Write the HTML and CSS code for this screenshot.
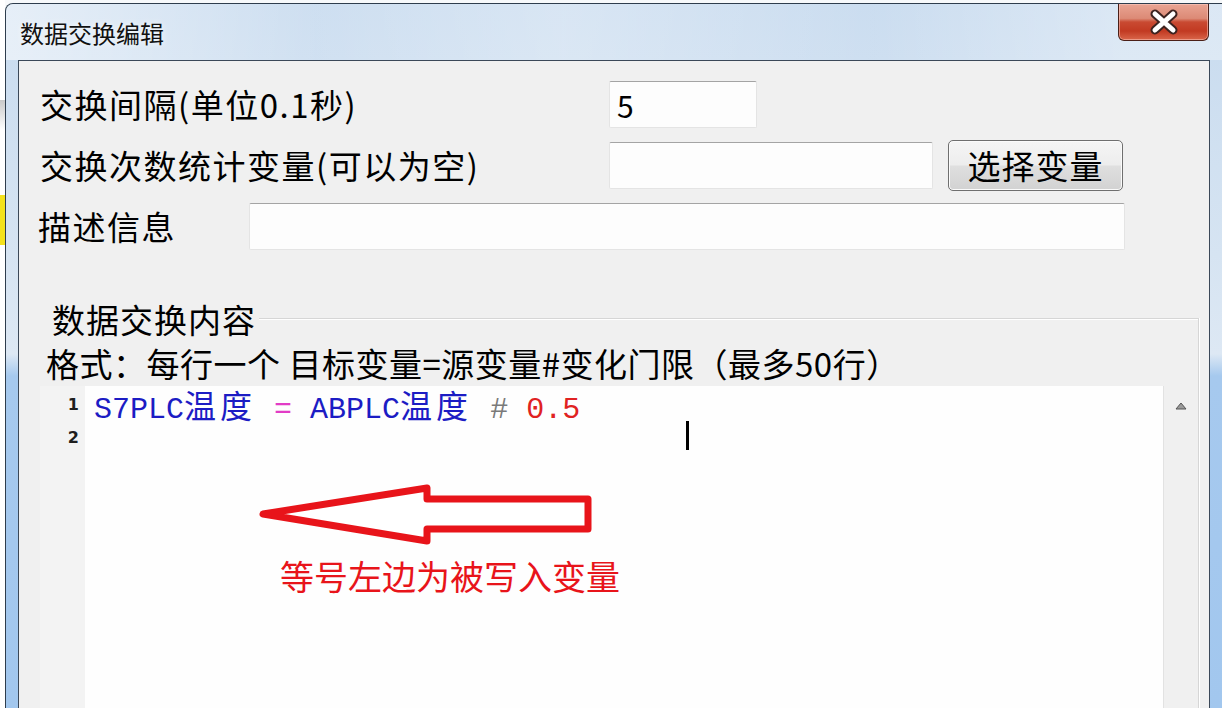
FILE: index.html
```html
<!DOCTYPE html>
<html>
<head>
    <meta charset="UTF-8">
    <title>数据交换编辑</title>
    <link rel="stylesheet" href="styles.css">
</head>
<body>
    <div class="behind"></div>

    <div class="window">
        <div class="titlebar">
            <span class="title">数据交换编辑</span>
            <button class="close">
                <svg width="36" height="26" viewBox="0 0 36 26">
                    <path d="M9 5 L27 21 M27 5 L9 21" stroke="#3d2320" stroke-width="9" stroke-linecap="round"/>
                    <path d="M9 5 L27 21 M27 5 L9 21" stroke="#ffffff" stroke-width="5" stroke-linecap="round"/>
                </svg>
            </button>
        </div>

        <div class="client">
            <div class="row row-interval">
                <label class="label label-wide">交换间隔(单位0.1秒)</label>
                <input class="field field-short" value="5">
            </div>

            <div class="row row-counter">
                <label class="label label-wide">交换次数统计变量(可以为空)</label>
                <input class="field field-mid">
                <button class="pick">选择变量</button>
            </div>

            <div class="row row-desc">
                <label class="label label-desc">描述信息</label>
                <input class="field field-long">
            </div>

            <div class="group">
                <div class="group-title"><span>数据交换内容</span></div>
                <div class="format">格式：每行一个 目标变量=源变量#变化门限（最多50行）</div>

                <div class="editor-row">
                    <div class="gutter">
                        <div class="num">1</div>
                        <div class="num">2</div>
                    </div>
                    <div class="editor">
                        <div class="code-line"><span class="var">S7PLC<span class="cjk">温度</span></span> <span class="op">=</span> <span class="var">ABPLC<span class="cjk">温度</span></span> <span class="hash">#</span> <span class="num-val">0.5</span></div>
                        <div class="code-line"></div>

                        <div class="ibeam"></div>

                        <svg class="note-arrow" width="337" height="64" viewBox="0 0 337 64">
                            <polygon points="5,31 169,5 169,16 330,16 330,46 169,46 169,58" fill="#ffffff" stroke="#e8141a" stroke-width="7" stroke-linejoin="round"/>
                        </svg>
                        <div class="note-text">等号左边为被写入变量</div>
                    </div>
                    <div class="scroll-col">
                        <svg width="12" height="8" viewBox="0 0 12 8">
                            <polygon points="1,7 6,1 11,7" fill="#9a9a9a" stroke="#555" stroke-width="1"/>
                        </svg>
                    </div>
                </div>
            </div>
        </div>
    </div>
</body>
</html>
```

FILE: styles.css
```css
body {
    margin: 0;
    width: 1222px;
    height: 708px;
    overflow: hidden;
    display: flex;
    background: #f7f9fb;
    font-family: "Noto Sans CJK SC", sans-serif;
}

.behind {
    flex: none;
    width: 5px;
    background: linear-gradient(to bottom, #ffffff 0, #ffffff 100px, #c9c9c9 100px, #ffffff 130px, #ffffff 195px, #f4e21c 195px, #f4e21c 245px, #ffffff 245px);
}

.window {
    flex: none;
    width: 1240px;
    margin-top: 3px;
    border: 1px solid #2e3d4d;
    border-bottom: none;
    border-radius: 8px 8px 0 0;
    background: linear-gradient(to bottom, #c8dbef 0, #d6e4f2 250px, #dde8f4 350px, #a6c9ee 372px, #a2c7ee 708px);
    display: flex;
    flex-direction: column;
}

.titlebar {
    flex: none;
    height: 56px;
    display: flex;
    align-items: flex-start;
    border-radius: 7px 7px 0 0;
    background: linear-gradient(to right, rgba(255, 255, 255, 0.55), rgba(255, 255, 255, 0.1) 25%, rgba(255, 255, 255, 0.3) 45%, rgba(255, 255, 255, 0.05) 70%, rgba(255, 255, 255, 0.35) 90%);
}

.title {
    flex: none;
    white-space: nowrap;
    margin: 14px 0 0 14px;
    font-size: 24px;
    line-height: 30px;
    color: #111;
    text-shadow: 0 0 6px rgba(255, 255, 255, 0.9);
}

.close {
    flex: none;
    margin-left: auto;
    margin-right: 37px;
    width: 91px;
    height: 37px;
    padding: 0;
    border: 1px solid #4a1f17;
    border-top: none;
    border-radius: 0 0 6px 6px;
    background: linear-gradient(to bottom, #e9a493 0, #dc8a76 40%, #c94a32 50%, #c23a22 75%, #d9664a 100%);
    box-shadow: inset 0 0 0 1px rgba(255, 210, 200, 0.5);
    display: flex;
    align-items: center;
    justify-content: center;
}

.client {
    flex: 1;
    box-sizing: border-box;
    width: 1192px;
    margin-left: 12px;
    border: 1px solid #3b4858;
    border-bottom: none;
    background: #f0f0f0;
    padding: 20px 10px 0 21px;
    overflow: hidden;
}

.row {
    display: flex;
    align-items: center;
}

.row-interval {
    height: 47px;
}

.row-counter {
    height: 51px;
    margin-top: 12px;
}

.row-desc {
    height: 47px;
    margin-top: 12px;
}

.label {
    flex: none;
    font-size: 33px;
    line-height: 1;
    letter-spacing: 1.5px;
    color: #000;
}

.label-wide {
    width: 569px;
}

.label-desc {
    width: 211px;
    margin-left: -2px;
}

.field {
    box-sizing: border-box;
    height: 47px;
    padding: 0 7px;
    border: 1px solid #e4e4e4;
    border-top-color: #a4a4a4;
    border-radius: 2px;
    background: #fdfdfd;
    font-family: "Noto Sans CJK SC", sans-serif;
    font-size: 30px;
    color: #000;
    outline: none;
}

.field-short {
    width: 148px;
}

.field-mid {
    width: 324px;
}

.field-long {
    width: 876px;
}

.pick {
    width: 175px;
    height: 51px;
    margin-left: 15px;
    padding: 0;
    border: 1px solid #6f6f6f;
    border-radius: 5px;
    background: linear-gradient(to bottom, #f5f5f5, #ededed 48%, #dfdfdf 52%, #d2d2d2);
    box-shadow: inset 0 0 0 1px #fbfbfb;
    font-family: "Noto Sans CJK SC", sans-serif;
    font-size: 33px;
    line-height: 1;
    letter-spacing: 1px;
    color: #000;
}

.group {
    margin-top: 68px;
    border-top: 1px solid #d6d6d6;
    border-right: 1px solid #d6d6d6;
    box-shadow: inset 0 1px 0 #ffffff, 1px 0 0 #ffffff;
}

.group-title {
    display: flex;
    height: 36px;
    margin-top: -18px;
}

.group-title span {
    padding: 0 3px 0 12px;
    background: #f0f0f0;
    font-size: 33px;
    line-height: 36px;
    letter-spacing: 1px;
    color: #000;
}

.format {
    margin-top: 8px;
    padding-left: 6px;
    font-size: 33px;
    line-height: 36px;
    letter-spacing: 0.5px;
    color: #000;
}

.editor-row {
    display: flex;
    margin-top: 5px;
    height: 330px;
}

.gutter {
    flex: none;
    width: 45px;
    box-sizing: border-box;
    padding: 2px 6px 0 0;
    background: #f3f3f3;
    text-align: right;
}

.num {
    height: 33px;
    font-family: "DejaVu Sans", sans-serif;
    font-size: 16px;
    font-weight: bold;
    line-height: 33px;
    color: #1e1e1e;
}

.editor {
    flex: 1;
    position: relative;
    padding: 2px 0 0 9px;
    background: #fefefe;
    border-right: 1px solid #e2e2e2;
}

.code-line {
    height: 33px;
    font-family: "Liberation Mono", monospace;
    font-size: 30px;
    line-height: 33px;
    white-space: pre;
}

.cjk {
    font-family: "Noto Sans CJK SC", sans-serif;
    font-size: 32px;
    letter-spacing: 4px;
}

.var {
    color: #1c1cc4;
}

.op {
    color: #e23cc6;
}

.hash {
    color: #7a7a7a;
}

.num-val {
    color: #e02222;
}

.ibeam {
    position: absolute;
    left: 601px;
    top: 35px;
    width: 3px;
    height: 29px;
    background: #000;
}

.note-arrow {
    position: absolute;
    left: 173px;
    top: 97px;
}

.note-text {
    position: absolute;
    left: 195px;
    top: 171px;
    font-size: 34px;
    line-height: 38px;
    color: #e8141a;
}

.scroll-col {
    flex: none;
    width: 34px;
    padding-top: 16px;
    display: flex;
    justify-content: center;
    align-items: flex-start;
}
```
